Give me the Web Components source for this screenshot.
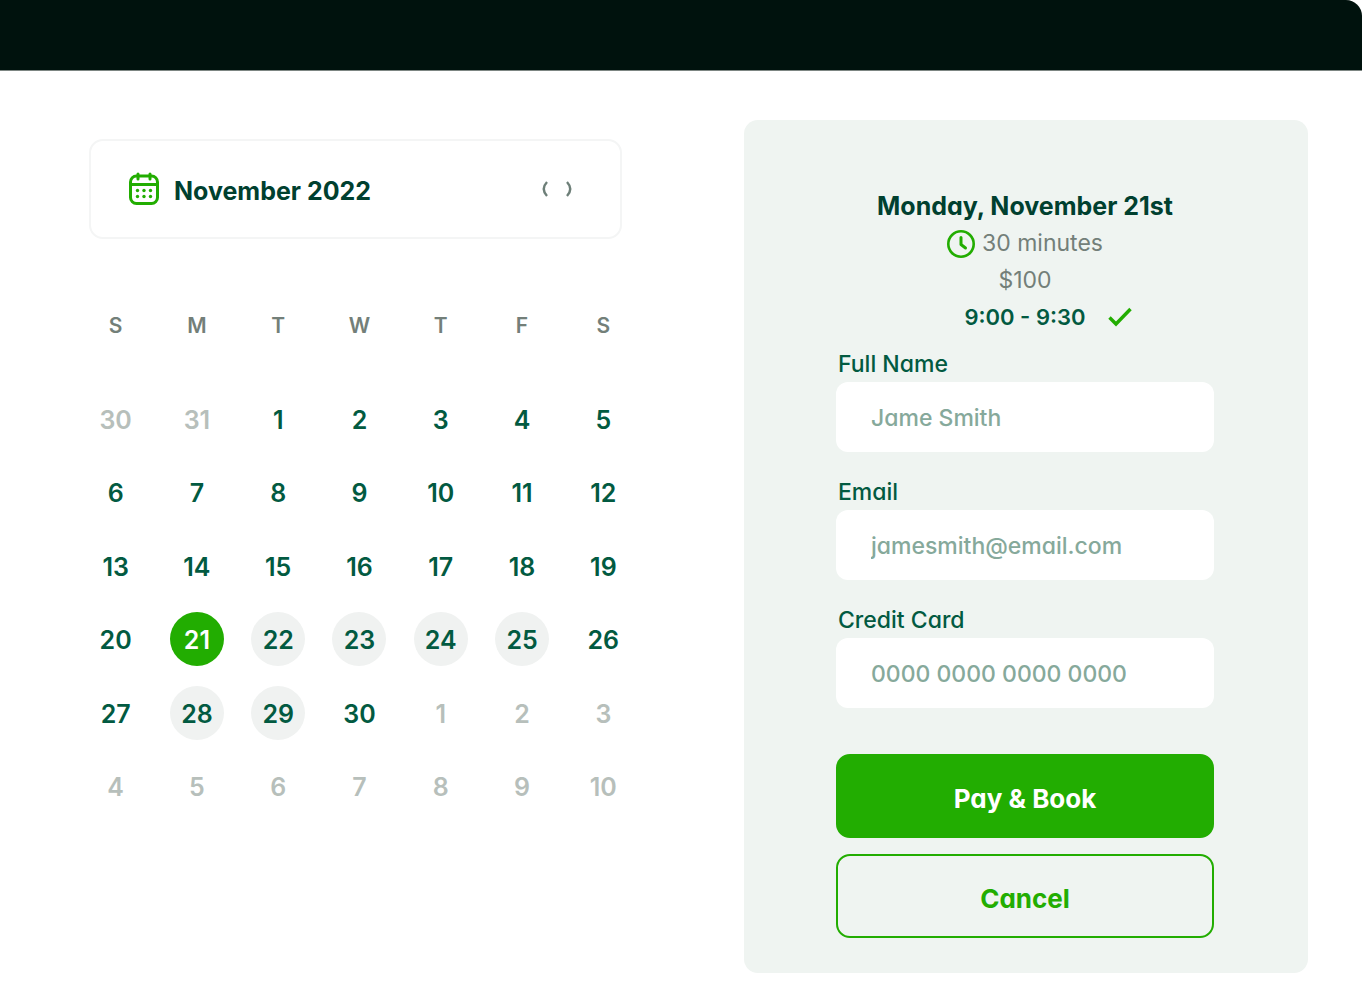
<!DOCTYPE html>
<html lang="en">
<head>
<meta charset="utf-8">
<meta name="viewport" content="width=device-width, initial-scale=1">
<title>Book an appointment</title>
<style>
  :root {
    --ink: #00402f;
    --ink-soft: #025a41;
    --muted: #737f79;
    --faint: #b7bfbb;
    --green: #22ad01;
    --panel: #eff4f1;
    --available: #f0f2f1;
    --placeholder: #86a99b;
  }
  body {
    margin: 0;
    background: #fff;
    color: var(--ink);
    font-family: Inter, "Liberation Sans", sans-serif;
    font-feature-settings: "cv11" 1;
  }
</style>
</head>
<body>
<booking-page>
  <booking-calendar slot="calendar" month="November 2022"></booking-calendar>
  <booking-form slot="form">
    <booking-summary slot="summary" date="Monday, November 21st" duration="30 minutes" price="$100" time="9:00 - 9:30"></booking-summary>
    <booking-field label="Full Name" type="text" placeholder="Jame Smith"></booking-field>
    <booking-field label="Email" type="email" placeholder="jamesmith@email.com"></booking-field>
    <booking-field label="Credit Card" type="text" placeholder="0000 0000 0000 0000"></booking-field>
    <booking-button slot="actions">Pay &amp; Book</booking-button>
    <booking-button slot="actions" variant="outline">Cancel</booking-button>
  </booking-form>
</booking-page>
<script>
class BookingElement extends HTMLElement {
  connectedCallback() {
    if (this.shadowRoot) return;
    this.attachShadow({ mode: 'open' }).innerHTML = this.render();
  }
}

customElements.define('booking-page', class extends BookingElement {
  render() {
    return `
      <style>
        :host { display: block; }
        header { box-sizing: border-box; height: 71px; background: #00120d; border-bottom: 1px solid #7d8683; border-top-right-radius: 16px; }
        main {
          display: grid; grid-template-columns: 569fr 564fr; gap: 100px;
          padding: 49px 54px 14px 75px; align-items: start;
        }
      </style>
      <header></header>
      <main><slot name="calendar"></slot><slot name="form"></slot></main>`;
  }
});

customElements.define('booking-calendar', class extends BookingElement {
  render() {
    const weekdays = [['S', 'Sunday'], ['M', 'Monday'], ['T', 'Tuesday'], ['W', 'Wednesday'], ['T', 'Thursday'], ['F', 'Friday'], ['S', 'Saturday']];
    const available = [22, 23, 24, 25, 28, 29];
    const cell = i => {
      const n = i - 1;
      if (n < 1) return `<td><button class="other">${n + 31}</button></td>`;
      if (n > 30) return `<td><button class="other">${n - 30}</button></td>`;
      const kind = n === 21 ? 'selected' : available.includes(n) ? 'available' : '';
      return `<td><button class="${kind}">${n}</button></td>`;
    };
    const rows = Array.from({ length: 6 }, (_, r) =>
      `<tr>${Array.from({ length: 7 }, (_, c) => cell(r * 7 + c)).join('')}</tr>`).join('');
    return `
      <style>
        :host { display: block; padding-top: 19px; }
        .month {
          box-sizing: border-box; height: 100px; margin: 0 22px 49px 14px; padding: 0 46px 0 37px;
          display: flex; align-items: center; gap: 14px;
          border: 2px solid #f4f5f5; border-radius: 14px;
        }
        .month svg { display: block; flex: none; }
        h2 { flex: 1; margin: 0; padding-top: 4px; font-size: 25px; line-height: 32px; font-weight: 700; }
        nav { display: flex; gap: 10px; }
        button { border: 0; padding: 0; background: none; color: inherit; font: inherit; font-feature-settings: inherit; cursor: pointer; }
        nav button { padding: 0 1px; }
        table { width: 100%; height: 535px; border-collapse: collapse; table-layout: fixed; }
        th { height: 74px; padding: 0 0 20px; color: var(--muted); font-size: 21px; font-weight: 600; }
        td { padding: 0; text-align: center; color: var(--ink-soft); font-size: 25px; font-weight: 600; }
        td button { width: 54px; height: 54px; padding-top: 3px; border-radius: 50%; display: block; margin: 0 auto; line-height: 51px; }
        .other { color: var(--faint); }
        .available { background: var(--available); }
        .selected { background: var(--green); color: #fff; }
      </style>
      <div class="month">
        <svg width="32" height="34" viewBox="0 0 32 34" fill="none" stroke="#22ad01" stroke-width="3" stroke-linecap="round" aria-hidden="true">
          <rect x="2.5" y="4" width="27" height="27.5" rx="6"/>
          <path d="M3 12.5H29M10 2V7M22 2V7"/>
          <g fill="#22ad01" stroke="none">
            <circle cx="9.5" cy="18.5" r="1.7"/><circle cx="16" cy="18.5" r="1.7"/><circle cx="22.5" cy="18.5" r="1.7"/>
            <circle cx="9.5" cy="24.5" r="1.7"/><circle cx="16" cy="24.5" r="1.7"/><circle cx="22.5" cy="24.5" r="1.7"/>
          </g>
        </svg>
        <h2>${this.getAttribute('month')}</h2>
        <nav aria-label="Month">
          <button aria-label="Previous month"><svg width="10" height="16" viewBox="0 0 10 16" fill="none" stroke="#6d7f78" stroke-width="2.4"><path d="M6 1Q-.5 8 6 15"/></svg></button>
          <button aria-label="Next month"><svg width="10" height="16" viewBox="0 0 10 16" fill="none" stroke="#6d7f78" stroke-width="2.4"><path d="M4 1Q10.5 8 4 15"/></svg></button>
        </nav>
      </div>
      <table>
        <thead><tr>${weekdays.map(([s, l]) => `<th scope="col" abbr="${l}">${s}</th>`).join('')}</tr></thead>
        <tbody>${rows}</tbody>
      </table>`;
  }
});

customElements.define('booking-form', class extends BookingElement {
  render() {
    return `
      <style>
        :host { display: block; background: var(--panel); border-radius: 14px; padding: 68px 94px 35px 92px; }
        .fields { display: grid; gap: 22px; padding: 11px 0 46px; }
        .actions { display: grid; gap: 16px; }
      </style>
      <slot name="summary"></slot>
      <div class="fields"><slot></slot></div>
      <div class="actions"><slot name="actions"></slot></div>`;
  }
});

customElements.define('booking-summary', class extends BookingElement {
  render() {
    const get = name => this.getAttribute(name);
    return `
      <style>
        :host { display: block; text-align: center; font-size: 23px; line-height: 37px; color: var(--muted); }
        h1, p { margin: 0; }
        h1 { color: var(--ink); font-size: 25px; line-height: 37px; font-weight: 700; white-space: nowrap; }
        svg { display: block; }
        .duration { display: flex; justify-content: center; align-items: center; gap: 7px; }
        .time { display: grid; grid-template-columns: 1fr auto 1fr; align-items: center; gap: 22px; color: var(--ink-soft); font-size: 22px; font-weight: 600; line-height: 36px; }
        .time span { grid-column: 2; }
      </style>
      <h1>${get('date')}</h1>
      <p class="duration">
        <svg width="28" height="28" viewBox="0 0 28 28" fill="none" stroke="#22ad01" aria-hidden="true">
          <circle cx="14" cy="14" r="12.7" stroke-width="2.6"/>
          <path d="M14 7.5V14.5L18.5 18" stroke-width="3" stroke-linecap="round" stroke-linejoin="round"/>
        </svg>
        <span>${get('duration')}</span>
      </p>
      <p>${get('price')}</p>
      <p class="time">
        <span>${get('time')}</span>
        <svg width="24" height="20" viewBox="0 0 24 20" fill="none" stroke="#22ad01" stroke-width="3.4" aria-hidden="true"><path d="M1.5 10.5L8 17L22.5 2"/></svg>
      </p>`;
  }
});

customElements.define('booking-field', class extends BookingElement {
  render() {
    const get = name => this.getAttribute(name);
    return `
      <style>
        :host { display: block; }
        label { display: block; padding-left: 2px; color: var(--ink-soft); font-size: 23px; line-height: 36px; font-weight: 500; }
        input {
          display: block; box-sizing: border-box; width: 100%; height: 70px; padding: 2px 35px 0;
          border: 0; border-radius: 12px; background: #fff; color: var(--ink-soft);
          font: inherit; font-feature-settings: inherit; font-size: 23px; font-weight: 500;
        }
        input::placeholder { color: var(--placeholder); opacity: 1; }
      </style>
      <label for="control">${get('label')}</label>
      <input id="control" type="${get('type')}" placeholder="${get('placeholder')}">`;
  }
});

customElements.define('booking-button', class extends BookingElement {
  render() {
    return `
      <style>
        :host { display: block; }
        button {
          display: block; box-sizing: border-box; width: 100%; height: 84px; padding: 5px 0 0;
          border: 2px solid var(--green); border-radius: 14px; background: var(--green); color: #fff;
          font: inherit; font-feature-settings: inherit; font-size: 26px; font-weight: 700; cursor: pointer;
        }
        :host([variant="outline"]) button { background: none; color: var(--green); }
      </style>
      <button type="button"><slot></slot></button>`;
  }
});
</script>
</body>
</html>
